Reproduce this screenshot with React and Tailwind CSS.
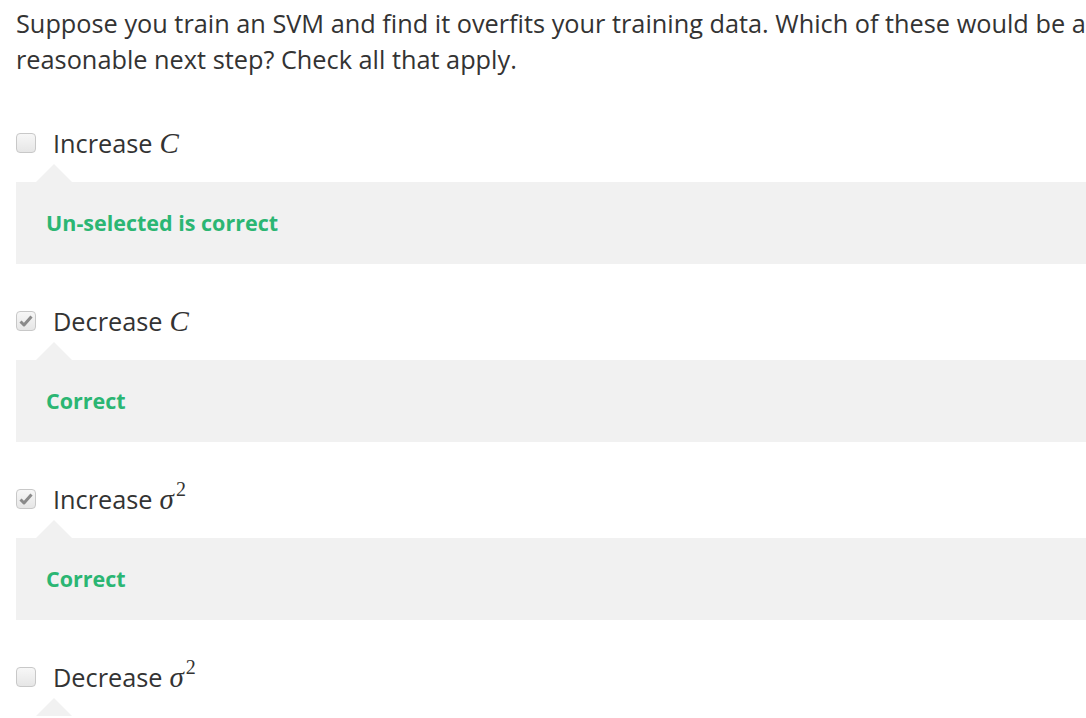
import React from "react";

const options = [
  { label: "Increase", math: "C", checked: false, feedback: "Un-selected is correct" },
  { label: "Decrease", math: "C", checked: true, feedback: "Correct" },
  { label: "Increase", math: "sigma", checked: true, feedback: "Correct" },
  { label: "Decrease", math: "sigma", checked: false, feedback: null },
];

function Checkbox({ checked }) {
  return (
    <span className="flex h-[20px] w-[20px] shrink-0 items-center justify-center rounded-[4px] border border-[#c8c8c8] bg-gradient-to-b from-[#f7f7f7] to-[#e6e6e6]">
      {checked && (
        <svg width="14" height="12" viewBox="0 0 14 12">
          <path d="M1.5 6.5 L5 10 L12.5 1.5" fill="none" stroke="#8a8a8a" strokeWidth="3" strokeLinejoin="round" />
        </svg>
      )}
    </span>
  );
}

function MathVar({ kind }) {
  if (kind === "C") {
    return <span className="ml-[7px] italic text-[29px] leading-[36px]" style={{ fontFamily: '"Liberation Serif", serif' }}>C</span>;
  }
  return (
    <span className="ml-[7px] text-[29px] leading-[36px]" style={{ fontFamily: '"Liberation Serif", serif' }}>
      <span className="italic">σ</span>
      <sup className="relative -top-[13px] ml-[2px] text-[20px]">2</sup>
    </span>
  );
}

export default function App() {
  return (
    <div className="w-[1086px] bg-white pl-4 pt-[5px] text-[#333]" style={{ fontFamily: '"Open Sans", sans-serif' }}>
      <p className="text-[25.3px] leading-[36px]">
        Suppose you train an SVM and find it overfits your training data. Which of these would be a reasonable next step? Check all that apply.
      </p>
      <div className="mt-[48px]">
        {options.map((opt, i) => (
          <div key={i} className="mb-[39px]">
            <div className="flex h-[36px] items-center">
              <Checkbox checked={opt.checked} />
              <span className="ml-[17px] text-[25.3px] leading-[36px]">{opt.label}</span>
              <MathVar kind={opt.math} />
            </div>
            <div className="relative mt-[21px]">
              <span className="absolute -top-[18px] left-[20px] h-0 w-0 border-x-[18px] border-b-[18px] border-x-transparent border-b-[#f1f1f1]" />
              {opt.feedback && (
                <div className="flex h-[82px] items-center bg-[#f1f1f1] pl-[30px]">
                  <span className="text-[21.5px] font-bold text-[#2bb673]">{opt.feedback}</span>
                </div>
              )}
            </div>
          </div>
        ))}
      </div>
    </div>
  );
}
